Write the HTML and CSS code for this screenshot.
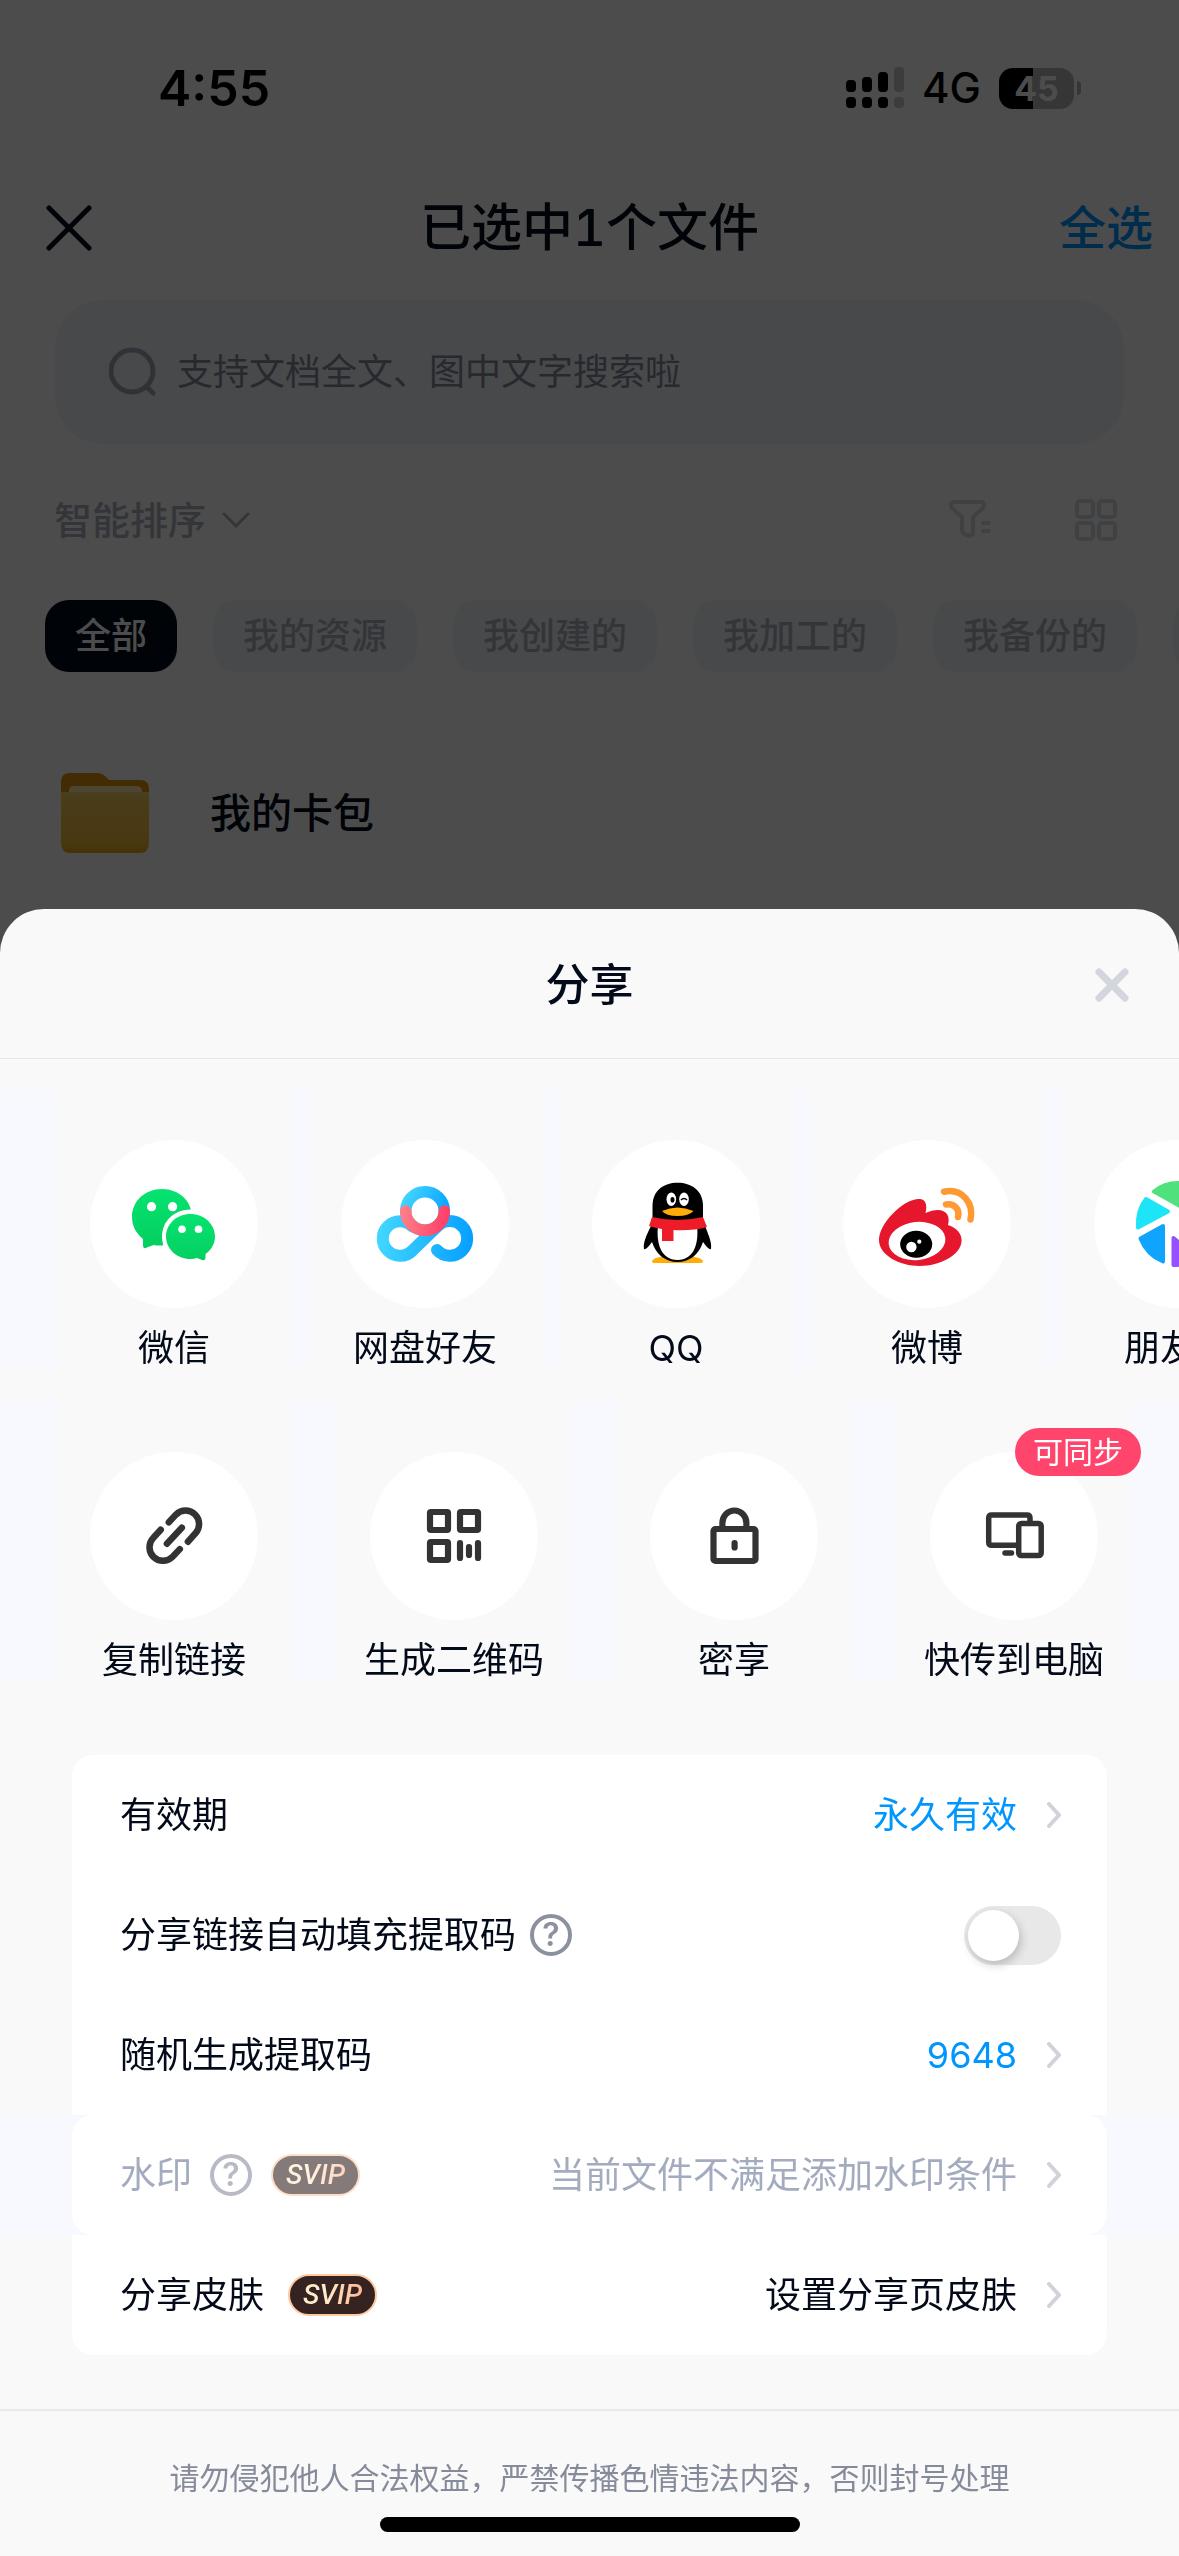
FILE: index.html
```html
<!DOCTYPE html>
<html lang="zh-CN">
<head>
<meta charset="utf-8">
<meta name="viewport" content="width=device-width, initial-scale=1">
<title>分享</title>
<link rel="stylesheet" href="styles.css">
</head>
<body>
<main class="library">
  <div class="status">
    <span class="clock">4:55</span>
    <div class="status-right">
      <svg class="signal" viewBox="0 0 58 42" aria-hidden="true">
        <g fill="#000"><rect x="0" y="13" width="10" height="12" rx="4"/><rect x="16" y="10" width="10" height="15" rx="4"/><rect x="32" y="5" width="10" height="20" rx="4"/>
        <rect x="0" y="30" width="10" height="11" rx="4"/><rect x="16" y="30" width="10" height="11" rx="4"/><rect x="32" y="30" width="10" height="11" rx="4"/></g>
        <g fill="#c8c8c8"><rect x="48" y="0" width="10" height="25" rx="4"/><rect x="48" y="30" width="10" height="11" rx="4"/></g>
      </svg>
      <span class="network">4G</span>
      <span class="battery"><span class="battery-level">45</span></span>
    </div>
  </div>

  <header class="topbar">
    <button class="icon-button" aria-label="关闭">
      <svg class="close-icon" viewBox="0 0 46 46" aria-hidden="true"><path d="M3 3L43 43M43 3L3 43" stroke="#030b1a" stroke-width="5" stroke-linecap="round"/></svg>
    </button>
    <h1 class="topbar-title">已选中1个文件</h1>
    <button class="select-all">全选</button>
  </header>

  <div class="search">
    <svg class="search-icon" viewBox="0 0 48 50" aria-hidden="true"><circle cx="23" cy="24" r="21" fill="none" stroke="#a5a9b8" stroke-width="5"/><path d="M38 40L44 46" stroke="#a5a9b8" stroke-width="5" stroke-linecap="round"/></svg>
    <input class="search-input" type="search" aria-label="搜索" placeholder="支持文档全文、图中文字搜索啦">
  </div>

  <div class="sortbar">
    <button class="sort">智能排序
      <svg class="sort-arrow" viewBox="0 0 28 18" aria-hidden="true"><path d="M2 3L14 15L26 3" fill="none" stroke="#adb2c0" stroke-width="3" stroke-linecap="round"/></svg>
    </button>
    <div class="tools">
      <button class="icon-button" aria-label="筛选">
        <svg class="tool-icon" viewBox="0 0 44 42" fill="none" stroke="#d6dbe2" stroke-width="4" stroke-linejoin="round" stroke-linecap="round" aria-hidden="true"><path d="M6 3H33C36 3 37 6 35 9L25 18V33C25 38 21 37 18 36Q14 34 14 31V18L4 9C2 6 3 3 6 3Z"/><path d="M35 24H41M35 32H41"/></svg>
      </button>
      <button class="icon-button" aria-label="网格视图">
        <svg class="tool-icon" viewBox="0 0 44 42" fill="none" stroke="#d6dbe2" stroke-width="4" aria-hidden="true"><rect x="3" y="2" width="16" height="16" rx="3"/><rect x="25" y="2" width="16" height="16" rx="3"/><rect x="3" y="24" width="16" height="16" rx="3"/><rect x="25" y="24" width="16" height="16" rx="3"/></svg>
      </button>
    </div>
  </div>

  <nav class="tabs">
    <button class="tab tab-active">全部</button>
    <button class="tab">我的资源</button>
    <button class="tab">我创建的</button>
    <button class="tab">我加工的</button>
    <button class="tab">我备份的</button>
    <button class="tab" aria-label="更多分类"></button>
  </nav>

  <a class="folder" href="#">
    <svg class="folder-icon" viewBox="0 0 90 80" aria-hidden="true">
      <defs>
        <linearGradient id="fold" x1="0" y1="0" x2="0" y2="1"><stop offset="0" stop-color="#f5d27a"/><stop offset=".12" stop-color="#f5c850"/><stop offset=".85" stop-color="#f2bd38"/><stop offset="1" stop-color="#eba214"/></linearGradient>
      </defs>
      <path d="M1 30V9Q1 0 10 0H36Q42 0 45 3L49 7H80Q89 7 89 16V30Z" fill="#e0900a"/>
      <path d="M9 26V18Q9 13 14 13H76Q82 13 82 18V26Z" fill="#ffe6a0"/>
      <path d="M1 19H89V70Q89 80 79 80H11Q1 80 1 70Z" fill="url(#fold)"/>
    </svg>
    <span>我的卡包</span>
  </a>
</main>
<div class="scrim"></div>

<section class="sheet" role="dialog" aria-labelledby="sheet-title">
  <header class="sheet-head">
    <h2 class="sheet-title" id="sheet-title">分享</h2>
    <button class="icon-button" aria-label="关闭分享">
      <svg class="sheet-close" viewBox="0 0 34 34" aria-hidden="true"><path d="M4 4L30 30M30 4L4 30" stroke="#d4d6de" stroke-width="7" stroke-linecap="round"/></svg>
    </button>
  </header>

  <div class="targets targets-apps">
    <button class="target">
      <svg class="disc" viewBox="0 0 168 168" aria-hidden="true">
        <defs><linearGradient id="wx" x1="0" y1="0" x2="0" y2="1"><stop offset="0" stop-color="#06e370"/><stop offset="1" stop-color="#04cf60"/></linearGradient></defs>
        <path d="M72 49C55 49 42 61 42 77C42 86 46 93 53 99V105Q53 110 58 107L64 105Q68 106 75 105C90 105 102 93 102 77C102 61 89 49 72 49Z" fill="url(#wx)"/>
        <path d="M100.500 69.500C84.500 69.500 72 81 72 96.500C72 112 84 123 100 123C112 123 129 114 129 96.500C129 80 116.500 69.500 100.500 69.500Z" fill="#fff"/>
        <path d="M100.500 74C87 74 76 84 76 96.500C76 109 87 119 100.500 119Q104 119 107 118L112 120Q115 121 115.500 118V114C121 110 125 104 125 96.500C125 84 114 74 100.500 74Z" fill="url(#wx)"/>
        <g fill="#fff"><circle cx="61.500" cy="66.700" r="4.600"/><circle cx="82.600" cy="66.700" r="4.600"/><circle cx="92" cy="89.300" r="3.800"/><circle cx="108.500" cy="89.300" r="3.800"/></g>
      </svg>
      <span class="target-label">微信</span>
    </button>
    <button class="target">
      <svg class="disc" viewBox="0 0 168 168" fill="none" aria-hidden="true">
        <defs>
          <linearGradient id="pan" gradientUnits="userSpaceOnUse" x1="36" y1="90" x2="132" y2="100"><stop offset="0" stop-color="#43d7ff"/><stop offset="1" stop-color="#069fff"/></linearGradient>
          <linearGradient id="pan-top" gradientUnits="userSpaceOnUse" x1="62" y1="55" x2="108" y2="75"><stop offset="0" stop-color="#43d7ff"/><stop offset="1" stop-color="#069fff"/></linearGradient>
          <linearGradient id="pan-red" gradientUnits="userSpaceOnUse" x1="62" y1="75" x2="106" y2="80"><stop offset="0" stop-color="#ff7d86"/><stop offset="1" stop-color="#ff3f68"/></linearGradient>
        </defs>
        <path d="M96 110A17.300 17.300 0 1 0 96.500 86.300L71.500 110.500A17.300 17.300 0 1 1 71.500 86.500" stroke="url(#pan)" stroke-width="12" stroke-linecap="round"/>
        <circle cx="84" cy="71" r="19.300" stroke="url(#pan-top)" stroke-width="11.500"/>
        <path d="M64.700 71A19.300 19.300 0 0 0 103.300 71" stroke="url(#pan-red)" stroke-width="11.500" stroke-linecap="round"/>
      </svg>
      <span class="target-label">网盘好友</span>
    </button>
    <button class="target">
      <svg class="disc" viewBox="0 0 168 168" aria-hidden="true">
        <path d="M60 122C60 118 67 116 85 116S111 118 111 122Q111 123 108 123H63Q60 123 60 122Z" fill="#ffac08"/>
        <path d="M59 86C54 96 51 103 52 109C54 110 57 106 60 102C64 115 74 122 85.500 122S107 115 111 102C114 106 117 110 119 109C120 103 117 96 113 86Z" fill="#000"/>
        <path d="M66 86H105C107 103 102 120 85.500 120S64 103 66 86Z" fill="#fff"/>
        <path d="M60.500 80V66C60.500 50 72 42.700 85.500 42.700S111 50 111 66V80Z" fill="#000"/>
        <path d="M60 77Q85 83 111 77L115 87Q100 91 81.500 90V101H70V89Q63 88 57 86Z" fill="#ed1c28"/>
        <ellipse cx="79.300" cy="59.300" rx="4.800" ry="6.700" fill="#fff"/><ellipse cx="92" cy="59.300" rx="4.800" ry="6.700" fill="#fff"/>
        <ellipse cx="80.500" cy="59.800" rx="2" ry="2.800" fill="#000"/><path d="M89 60Q92 57 95 60" stroke="#000" stroke-width="1.500" fill="none"/>
        <path d="M70 71Q85.500 64 101.500 71Q97 76 85.500 76T70 71Z" fill="#ffac08"/>
      </svg>
      <span class="target-label">QQ</span>
    </button>
    <button class="target">
      <svg class="disc" viewBox="0 0 168 168" aria-hidden="true">
        <path d="M75 59C82 58 85 64 82.500 73C92 69 100 69 104 74C106 77 106 81 105 85C114 88 119 94 118.600 101C118 115 97 126 76.700 126S36 115 36 100C36 84 59 60 75 59Z" fill="#e6162d"/>
        <ellipse cx="74" cy="101" rx="28.500" ry="19" transform="rotate(-6 74 101)" fill="#fff"/>
        <ellipse cx="73.200" cy="104.300" rx="16" ry="13.500" fill="#000"/>
        <circle cx="68.400" cy="107" r="5.200" fill="#fff"/><circle cx="76.300" cy="101.700" r="2.100" fill="#fff"/>
        <g fill="none" stroke="#ff9933" stroke-width="6.500" stroke-linecap="round"><path d="M101 51.700C120 48 131 64 127.500 79.500"/><path d="M103 64.500C111 63 117 69 115 77"/></g>
      </svg>
      <span class="target-label">微博</span>
    </button>
    <button class="target">
      <svg class="disc" viewBox="0 0 168 168" stroke-width="4" stroke-linejoin="round" aria-hidden="true">
        <path d="M60 51.500Q70 43 84 43Q94 43 100 46L86 66Z" fill="#4fe27c" stroke="#4fe27c"/>
        <path d="M52 59L74 71.500L44 87.500Q43 70 52 59Z" fill="#1de5f7" stroke="#1de5f7"/>
        <path d="M69 86L46.500 98.500Q53 115 69 121.500Z" fill="#10a4ff" stroke="#10a4ff"/>
        <path d="M79.500 98L104 119Q92 125 79.500 125Z" fill="#9550ff" stroke="#9550ff"/>
        <path d="M96 98L122 98Q118 110 109 116Z" fill="#ff456c" stroke="#ff456c"/>
        <path d="M99 84V48Q122 58 124 78Z" fill="#ffc23c" stroke="#ffc23c"/>
      </svg>
      <span class="target-label">朋友圈</span>
    </button>
  </div>

  <div class="targets targets-tools">
    <button class="target">
      <svg class="disc" viewBox="0 0 168 168" fill="none" stroke="#333" stroke-width="6.500" stroke-linecap="round" aria-hidden="true"><path d="M91.800 75.700L76.900 91.700M78.800 70.300L86 62.600A13.500 13.500 0 0 1 105.200 81.600L97.900 89.700M89.800 97.100L82.600 104.800A13.500 13.500 0 0 1 63.400 85.800L70.700 77.700"/></svg>
      <span class="target-label">复制链接</span>
    </button>
    <button class="target">
      <svg class="disc" viewBox="0 0 168 168" fill="none" stroke="#333" stroke-width="6.200" aria-hidden="true"><rect x="60" y="60" width="18" height="18" rx="1"/><rect x="90" y="60" width="18" height="18" rx="1"/><rect x="60" y="90" width="18" height="18" rx="1"/><path d="M90 91V106M99 95V103M108 91V106" stroke-linecap="round"/></svg>
      <span class="target-label">生成二维码</span>
    </button>
    <button class="target">
      <svg class="disc" viewBox="0 0 168 168" fill="none" stroke="#333" stroke-width="6.200" aria-hidden="true"><rect x="63.500" y="77" width="42" height="32" rx="2"/><path d="M72.400 76V71A12 12.500 0 0 1 96.400 71V76"/><path d="M84.600 91V95.500" stroke-linecap="round"/></svg>
      <span class="target-label">密享</span>
    </button>
    <button class="target">
      <svg class="disc" viewBox="0 0 168 168" fill="none" stroke="#333" stroke-width="5.500" aria-hidden="true"><path d="M88 93.300H61.700Q58.700 93.300 58.700 90.300V66Q58.700 63 61.700 63H97Q100 63 100 66V70"/><rect x="88.700" y="71.500" width="22.500" height="32" rx="2.500"/><path d="M75 101H81.500" stroke-linecap="round"/></svg>
      <span class="target-label">快传到电脑</span>
      <span class="sync-badge">可同步</span>
    </button>
  </div>

  <div class="options">
    <button class="option">
      <span>有效期</span>
      <span class="value value-link">永久有效</span>
      <svg class="chevron" viewBox="0 0 14 26"><path d="M2 2L12 13L2 24"/></svg>
    </button>
    <div class="option">
      <label class="autofill-label" for="autofill">分享链接自动填充提取码</label>
      <button class="help" aria-label="自动填充说明">?</button>
      <input class="switch" type="checkbox" role="switch" id="autofill">
    </div>
    <button class="option">
      <span>随机生成提取码</span>
      <span class="value value-link">9648</span>
      <svg class="chevron" viewBox="0 0 14 26"><path d="M2 2L12 13L2 24"/></svg>
    </button>
    <div class="option-band">
      <div class="option option-disabled">
        <span>水印</span>
        <button class="help help-dim" aria-label="水印说明">?</button>
        <span class="svip svip-dim"><span class="svip-text">SVIP</span></span>
        <span class="value">当前文件不满足添加水印条件</span>
        <svg class="chevron" viewBox="0 0 14 26"><path d="M2 2L12 13L2 24"/></svg>
      </div>
    </div>
    <button class="option">
      <span>分享皮肤</span>
      <span class="svip svip-apart"><span class="svip-text">SVIP</span></span>
      <span class="value">设置分享页皮肤</span>
      <svg class="chevron" viewBox="0 0 14 26"><path d="M2 2L12 13L2 24"/></svg>
    </button>
  </div>

  <footer class="notice">
    <p class="notice-text">请勿侵犯他人合法权益，严禁传播色情违法内容，否则封号处理</p>
    <div class="home-indicator"></div>
  </footer>
</section>
</body>
</html>
```
FILE: styles.css
```css
* { box-sizing: border-box; }

body {
  margin: 0;
  overflow-x: hidden;
  background: #fff;
  color: #030b1a;
  font-family: Inter, "Noto Sans CJK SC", sans-serif;
  font-size: 36px;
  line-height: 48px;
}

button {
  margin: 0;
  padding: 0;
  border: 0;
  background: none;
  color: inherit;
  font: inherit;
}

h1, h2, p { margin: 0; }
svg { display: block; flex: none; }
a { color: inherit; text-decoration: none; }

.icon-button { display: block; }

/* Page behind the sheet */
.library { overflow: hidden; }

.scrim {
  position: fixed;
  inset: 0;
  background: rgba(0, 0, 0, .7);
}

.status {
  display: flex;
  align-items: center;
  justify-content: space-between;
  padding: 56px 98px 56px 158px;
  line-height: 64px;
}

.clock { color: #000; font-size: 50px; font-weight: 600; }

.status-right { display: flex; align-items: center; gap: 18px; }
.signal { width: 58px; height: 42px; }
.network { color: #000; font-size: 42px; font-weight: 500; }

.battery {
  display: flex;
  align-items: center;
  gap: 3px;
}
.battery::after {
  content: "";
  width: 4px;
  height: 14px;
  border-radius: 0 4px 4px 0;
  background: #b4b4b4;
}
.battery-level {
  width: 75px;
  border-radius: 14px;
  background: linear-gradient(90deg, #000 45%, #b4b4b4 45%);
  color: #fff;
  font-size: 34px;
  font-weight: 700;
  line-height: 41px;
  text-align: center;
}

.topbar {
  display: grid;
  grid-template-columns: 1fr auto 1fr;
  align-items: center;
  padding: 20px 26px;
  line-height: 64px;
}
.topbar .icon-button { padding-left: 20px; }
.close-icon { width: 46px; height: 46px; }
.topbar-title { font-size: 51px; font-weight: 500; font-variant-numeric: tabular-nums; }
.select-all { justify-self: end; color: #0096ff; font-size: 47px; font-weight: 500; }

.search {
  display: flex;
  align-items: center;
  gap: 20px;
  margin: 20px 55px 0;
  padding: 48px 52px 48px 54px;
  border-radius: 48px;
  background: #f0f4fa;
}
.search-icon { width: 48px; height: 50px; margin: -1px 0; }
.search-input {
  flex: 1;
  min-width: 0;
  padding: 0;
  border: 0;
  outline: 0;
  background: none;
  font: inherit;
}
.search-input::placeholder { color: #868b9b; opacity: 1; }

.sortbar {
  display: flex;
  align-items: center;
  justify-content: space-between;
  padding: 52px 61px 56px 54px;
}
.sort {
  display: flex;
  align-items: center;
  gap: 16px;
  color: #adb2c0;
  font-size: 38px;
  font-weight: 500;
}
.sort-arrow { width: 28px; height: 18px; }
.tools { display: flex; gap: 82px; }
.tool-icon { width: 44px; height: 42px; }

.tabs { display: flex; gap: 36px; padding-left: 45px; }
.tab {
  flex: none;
  min-width: 120px;
  height: 72px;
  padding: 0 30px;
  border-radius: 24px;
  background: #f0f4fa;
  color: #adb2c0;
  font-weight: 500;
}
.tab-active { background: #030b1a; color: #fff; }

.folder {
  display: flex;
  align-items: center;
  gap: 60px;
  padding: 101px 60px 56px;
  font-size: 41px;
  font-weight: 500;
}
.folder-icon { width: 90px; height: 80px; }

/* Share sheet */
.sheet {
  position: relative;
  overflow: hidden;
  border-radius: 44px 44px 0 0;
  background: #f9f9f9;
}

.sheet-head {
  display: grid;
  grid-template-columns: 1fr auto 1fr;
  align-items: center;
  padding: 44px 50px 41px;
  border-bottom: 1px solid #e6e7ea;
}
.sheet-head .icon-button { justify-self: end; }
.sheet-title { grid-column: 2; font-size: 44px; font-weight: 500; line-height: 64px; }
.sheet-close { width: 34px; height: 34px; }

.targets {
  display: flex;
  padding-left: 57px;
  background: #f8f9fe;
}
.targets-apps { gap: 17px; margin-top: 31px; }
.targets-tools { gap: 46px; margin: 34px 0 76px; }

.target {
  position: relative;
  display: flex;
  flex: none;
  flex-direction: column;
  align-items: center;
  gap: 22px;
  width: 234px;
  padding: 50px 0 0;
  background: #f9f9f9;
}
.targets-tools .target { padding-top: 51px; }
.disc { width: 168px; height: 168px; border-radius: 50%; background: #fff; }
.target-label { line-height: 37px; }

.sync-badge {
  position: absolute;
  top: 27px;
  right: -10px;
  padding: 0 18px;
  border-radius: 24px;
  background: #ff456c;
  color: #fff;
  font-size: 30px;
  line-height: 48px;
}

.options { padding-bottom: 54px; }
.option {
  display: flex;
  align-items: center;
  width: calc(100% - 144px);
  height: 120px;
  margin: 0 72px;
  padding: 0 46px 0 48px;
  background: #fff;
  text-align: left;
}
.option:first-child { border-radius: 21px 21px 0 0; }
.option:last-child { border-radius: 0 0 21px 21px; }
.option-band { background: #f8f9fe; }
.option-band .option { border-radius: 21px; }
.option-disabled { color: #a3abbf; }

.value { margin-left: auto; }
.value-link { color: #0096ff; }
.chevron {
  width: 14px;
  height: 26px;
  margin-left: 30px;
  fill: none;
  stroke: #d0d3da;
  stroke-width: 4px;
  stroke-linecap: round;
}

.help {
  width: 42px;
  height: 42px;
  margin-left: 18px;
  border: 4px solid #8b91a1;
  border-radius: 50%;
  color: #8b91a1;
  font-size: 32px;
  font-weight: 600;
  line-height: 34px;
  text-align: center;
}
.autofill-label + .help { margin-left: 14px; }
.help-dim { border-color: #b8bbc6; color: #b8bbc6; }

.switch {
  display: flex;
  align-items: center;
  appearance: none;
  width: 97px;
  height: 59px;
  margin: 0 0 0 auto;
  padding: 4px;
  border-radius: 30px;
  background: #e8e8e8;
}
.switch::before {
  content: "";
  width: 51px;
  height: 51px;
  border-radius: 50%;
  background: #fff;
  box-shadow: 2px 4px 10px rgba(0, 0, 0, .2);
}
.switch:checked { justify-content: flex-end; background: #0096ff; }

.svip {
  width: 89px;
  height: 42px;
  margin-left: 19px;
  border: 2px solid #ffc9a0;
  border-radius: 21px;
  background: #352322;
  font-family: Roboto, sans-serif;
  font-size: 28px;
  font-style: italic;
  font-weight: 500;
  line-height: 38px;
  text-align: center;
}
.svip-text {
  background: linear-gradient(90deg, #ffeacb 40%, #ffb894);
  background-clip: text;
  color: transparent;
}
.svip-dim { opacity: .6; }
.svip-apart { margin-left: 24px; }

.notice {
  display: flex;
  flex-direction: column;
  align-items: center;
  gap: 15px;
  padding: 43px 24px 24px;
  border-top: 2px solid #e9eaec;
}
.notice-text { color: #858b9a; font-size: 30px; }
.home-indicator { width: 420px; height: 15px; border-radius: 8px; background: #000; }
```
